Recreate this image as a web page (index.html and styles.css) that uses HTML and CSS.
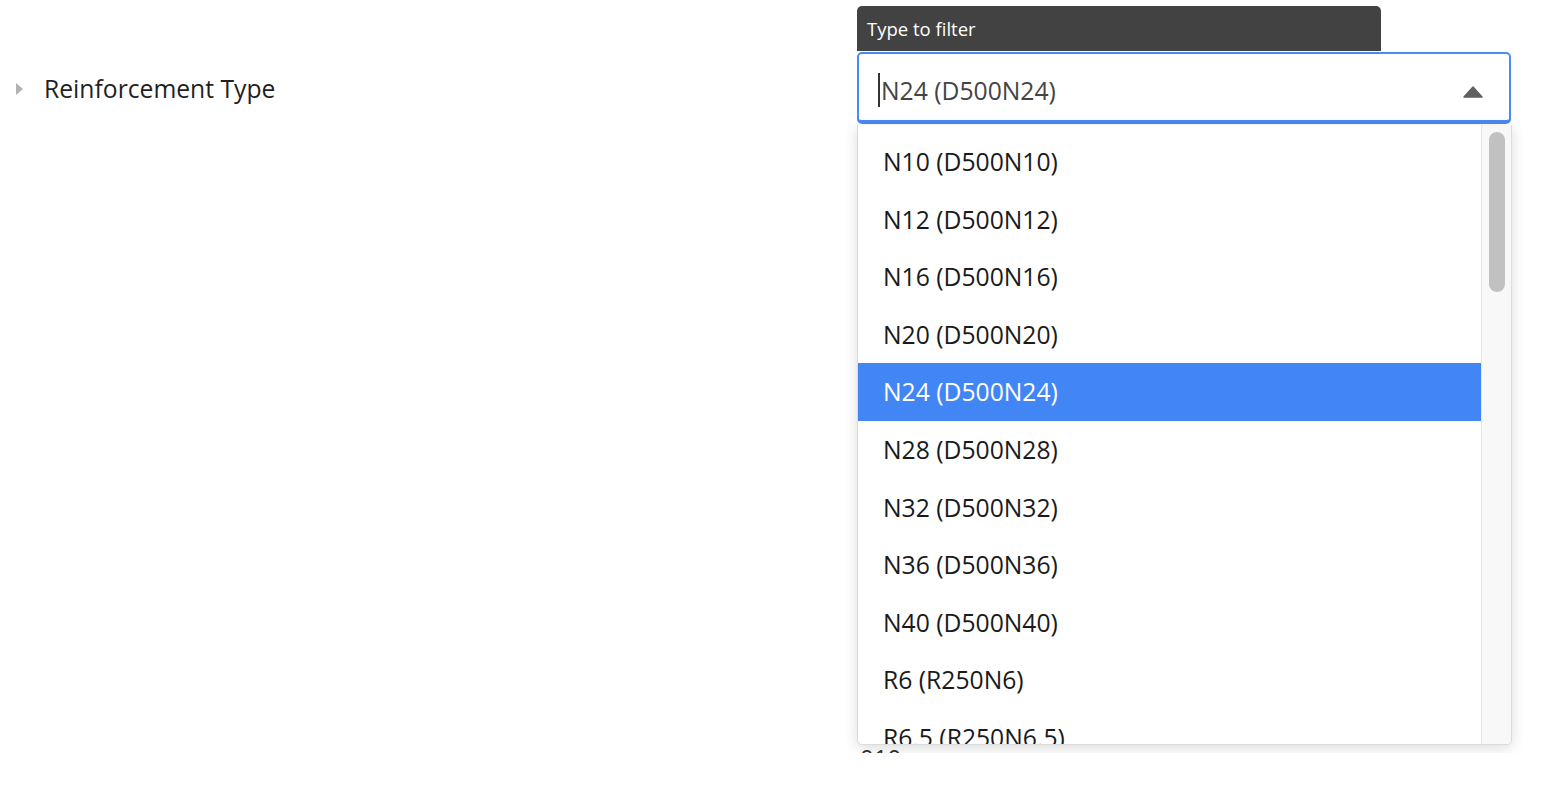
FILE: index.html
```html
<!DOCTYPE html>
<html lang="en">
<head>
    <meta charset="UTF-8">
    <meta name="viewport" content="width=device-width, initial-scale=1.0">
    <title>Reinforcement Type</title>
    <link rel="stylesheet" href="styles.css">
</head>
<body>
    <div class="page">
        <div class="form-row">
            <div class="row-label">
                <span class="expander"></span>
                <span>Reinforcement Type</span>
            </div>
            <div class="field">
                <div class="filter-tip">Type to filter</div>
                <div class="combo">
                    <span class="caret-line"></span>
                    <span class="combo-value">N24 (D500N24)</span>
                    <svg class="combo-arrow" width="20" height="12" viewBox="0 0 20 12">
                        <path d="M10 1 L19 11 L1 11 Z" fill="#606060" stroke="#606060" stroke-width="1.5" stroke-linejoin="round"/>
                    </svg>
                </div>
                <div class="menu">
                    <ul class="menu-list">
                        <li>N10 (D500N10)</li>
                        <li>N12 (D500N12)</li>
                        <li>N16 (D500N16)</li>
                        <li>N20 (D500N20)</li>
                        <li class="active">N24 (D500N24)</li>
                        <li>N28 (D500N28)</li>
                        <li>N32 (D500N32)</li>
                        <li>N36 (D500N36)</li>
                        <li>N40 (D500N40)</li>
                        <li>R6 (R250N6)</li>
                        <li>R6.5 (R250N6.5)</li>
                        <li>R10 (R250N10)</li>
                    </ul>
                    <div class="scroll-track">
                        <div class="scroll-thumb"></div>
                    </div>
                </div>
            </div>
        </div>
        <div class="form-row next-row">
            <div></div>
            <div class="next-value">010</div>
        </div>
    </div>
</body>
</html>
```

FILE: styles.css
```css
body {
    font-family: "Open Sans", "Noto Sans", sans-serif;
    margin: 0;
    padding: 0;
    background-color: #fff;
    color: #1f1f1f;
}
.page {
    height: 753px;
    overflow: hidden;
}
.form-row {
    display: grid;
    grid-template-columns: 857px 655px;
    align-items: center;
}
.form-row:first-child {
    padding-top: 52px;
}
.row-label {
    display: flex;
    align-items: center;
    padding-left: 16px;
    font-size: 24.7px;
    height: 72px;
}
.expander {
    width: 0;
    height: 0;
    border-top: 6px solid transparent;
    border-bottom: 6px solid transparent;
    border-left: 7px solid #b3b3b3;
    margin-right: 21px;
    margin-top: 2px;
}
.field {
    position: relative;
}
.filter-tip {
    position: absolute;
    left: 0;
    bottom: 100%;
    margin-bottom: 1px;
    width: 524px;
    height: 45px;
    padding-left: 10px;
    box-sizing: border-box;
    background-color: #424242;
    color: #fff;
    font-size: 18.5px;
    line-height: 45px;
    border-radius: 5px 5px 0 0;
}
.combo {
    display: flex;
    align-items: center;
    height: 72px;
    box-sizing: border-box;
    border: 2px solid #4a8af4;
    border-bottom-width: 4px;
    border-radius: 5px;
    padding: 6px 26px 0 19px;
    font-size: 24.7px;
    color: #444;
    width: 654px;
}
.caret-line {
    width: 2px;
    height: 34px;
    background-color: #333;
    margin-right: 1px;
}
.combo-value {
    flex: 1;
}
.combo-arrow {
    display: block;
    margin-top: 3px;
}
.menu {
    position: absolute;
    top: 100%;
    left: 0;
    width: 655px;
    height: 620px;
    margin-top: 1px;
    box-sizing: border-box;
    display: flex;
    background-color: #fff;
    border: 1px solid #dcdcdc;
    border-top: none;
    border-radius: 0 0 5px 5px;
    box-shadow: 0 3px 14px rgba(0, 0, 0, 0.14);
    overflow: hidden;
    z-index: 2;
}
.menu-list {
    flex: 1;
    list-style: none;
    margin: 0;
    padding: 8px 0 0;
    overflow: hidden;
}
.menu-list li {
    height: 57.6px;
    line-height: 57.6px;
    padding-left: 25px;
    font-size: 24.7px;
    color: #1a1a1a;
    white-space: nowrap;
}
.menu-list li.active {
    background-color: #4286f5;
    color: #fff;
}
.scroll-track {
    width: 30px;
    background-color: #f8f8f8;
    border-left: 1px solid #e6e6e6;
    box-sizing: border-box;
    padding: 7px 6px 0 7px;
}
.scroll-thumb {
    height: 160px;
    background-color: #c1c1c1;
    border-radius: 8px;
}
.next-row {
    margin-top: 617px;
}
.next-value {
    font-size: 24px;
    color: #333;
    padding-left: 3px;
}
```
